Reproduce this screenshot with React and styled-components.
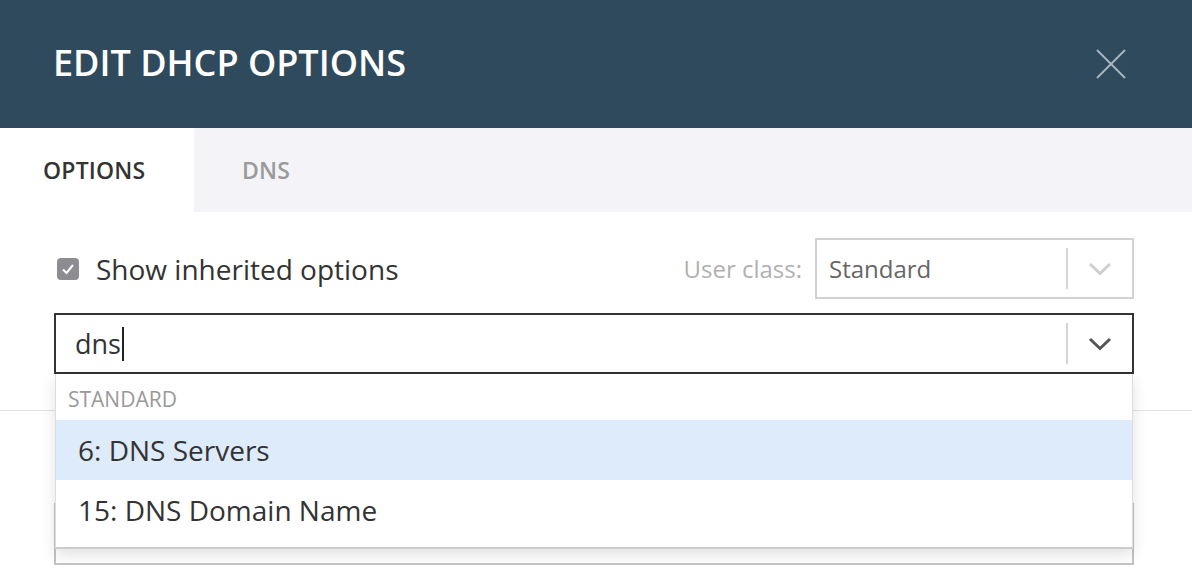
import React from "react";
import styled, { createGlobalStyle } from "styled-components";

const GlobalStyle = createGlobalStyle`
  html, body {
    margin: 0;
    padding: 0;
    background: #ffffff;
    font-family: "Open Sans", "Noto Sans", sans-serif;
  }
  * { box-sizing: border-box; }
`;

const options = [
  { id: 6, label: "6: DNS Servers", active: true },
  { id: 15, label: "15: DNS Domain Name", active: false },
];

function Chevron({ color }) {
  return (
    <svg width="24" height="14" viewBox="0 0 24 14">
      <polyline points="2,2 12,11.5 22,2" fill="none" stroke={color} strokeWidth="3" />
    </svg>
  );
}

function App() {
  return (
    <Page>
      <GlobalStyle />
      <Header>
        <Title>EDIT DHCP OPTIONS</Title>
        <CloseButton aria-label="close">
          <svg width="30" height="30" viewBox="0 0 30 30">
            <line x1="1" y1="1" x2="29" y2="29" stroke="#a9b5bd" strokeWidth="2" />
            <line x1="29" y1="1" x2="1" y2="29" stroke="#a9b5bd" strokeWidth="2" />
          </svg>
        </CloseButton>
      </Header>

      <Tabs>
        <Tab active>OPTIONS</Tab>
        <Tab>DNS</Tab>
      </Tabs>

      <Body>
        <Section>
          <ControlsRow>
            <CheckLabel>
              <CheckBox>
                <svg width="14" height="12" viewBox="0 0 14 12">
                  <polyline points="2,6.5 5.5,10 12,2" fill="none" stroke="#fff" strokeWidth="2" />
                </svg>
              </CheckBox>
              Show inherited options
            </CheckLabel>
            <ClassPicker>
              <FieldLabel>User class:</FieldLabel>
              <Select>
                <SelectValue>Standard</SelectValue>
                <Separator />
                <ArrowCell>
                  <Chevron color="#cfcfcf" />
                </ArrowCell>
              </Select>
            </ClassPicker>
          </ControlsRow>

          <SearchWrap>
            <SearchBox>
              <SearchValue>
                dns<Caret />
              </SearchValue>
              <Separator />
              <ArrowCell>
                <Chevron color="#555555" />
              </ArrowCell>
            </SearchBox>
            <Menu>
              <MenuGroup>STANDARD</MenuGroup>
              {options.map((opt) => (
                <MenuItem key={opt.id} active={opt.active}>
                  {opt.label}
                </MenuItem>
              ))}
            </Menu>
          </SearchWrap>
        </Section>

        <Rule />

        <Section>
          <ValueBox />
        </Section>
      </Body>
    </Page>
  );
}

export default App;

const Page = styled.div`
  width: 1192px;
  min-height: 588px;
  display: flex;
  flex-direction: column;
`;

const Header = styled.div`
  height: 128px;
  background: #2e4a5c;
  display: flex;
  align-items: center;
  justify-content: space-between;
  padding: 0 66px 4px 53px;
`;

const Title = styled.h1`
  margin: 0;
  color: #ffffff;
  font-size: 36px;
  font-weight: 600;
`;

const CloseButton = styled.button`
  border: none;
  background: transparent;
  padding: 0;
  width: 30px;
  height: 30px;
  margin-top: 4px;
  display: flex;
  cursor: pointer;
`;

const Tabs = styled.div`
  height: 84px;
  background: #f4f4f8;
  display: flex;
`;

const Tab = styled.div`
  width: ${(p) => (p.active ? "194px" : "auto")};
  padding: 0 48px 0 ${(p) => (p.active ? "43px" : "48px")};
  display: flex;
  align-items: center;
  background: ${(p) => (p.active ? "#ffffff" : "transparent")};
  color: ${(p) => (p.active ? "#333333" : "#9a9a9a")};
  font-size: 23px;
  font-weight: 600;
  letter-spacing: 0.2px;
`;

const Body = styled.div`
  padding-top: 26px;
  display: flex;
  flex-direction: column;
`;

const Section = styled.div`
  padding: 0 58px 0 54px;
`;

const ControlsRow = styled.div`
  display: flex;
  align-items: center;
  justify-content: space-between;
`;

const CheckLabel = styled.label`
  display: flex;
  align-items: center;
  gap: 17px;
  margin-left: 3px;
  font-size: 28px;
  color: #333333;
`;

const CheckBox = styled.span`
  width: 22px;
  height: 22px;
  border-radius: 4px;
  background: #8c8c91;
  display: flex;
  align-items: center;
  justify-content: center;
`;

const ClassPicker = styled.div`
  display: flex;
  align-items: center;
  gap: 13px;
`;

const FieldLabel = styled.span`
  font-size: 24px;
  color: #b0b0b0;
`;

const Select = styled.div`
  width: 319px;
  height: 61px;
  border: 2px solid #d2d2d2;
  display: flex;
  align-items: center;
`;

const SelectValue = styled.span`
  flex: 1;
  padding-left: 12px;
  font-size: 24px;
  color: #666666;
`;

const Separator = styled.span`
  width: 2px;
  height: 41px;
  background: #d4d4d4;
`;

const ArrowCell = styled.span`
  width: 64px;
  display: flex;
  align-items: center;
  justify-content: center;
`;

const SearchWrap = styled.div`
  position: relative;
  margin-top: 14px;
`;

const SearchBox = styled.div`
  height: 61px;
  border: 2px solid #333333;
  display: flex;
  align-items: center;
`;

const SearchValue = styled.span`
  flex: 1;
  padding-left: 19px;
  font-size: 27px;
  color: #333333;
  display: flex;
  align-items: center;
`;

const Caret = styled.span`
  display: inline-block;
  width: 2px;
  height: 34px;
  margin-left: 1px;
  background: #222222;
`;

const Menu = styled.div`
  position: absolute;
  top: 100%;
  left: 1px;
  right: 1px;
  z-index: 5;
  background: #ffffff;
  border: 1px solid #dddddd;
  border-top: none;
  border-bottom: 2px solid #cccccc;
  padding-bottom: 7px;
  box-shadow: 0 6px 14px rgba(0, 0, 0, 0.12);
`;

const MenuGroup = styled.div`
  height: 46px;
  display: flex;
  align-items: center;
  padding: 3px 0 0 12px;
  font-size: 21px;
  color: #999999;
`;

const MenuItem = styled.div`
  height: 60px;
  display: flex;
  align-items: center;
  padding-left: 22px;
  font-size: 28px;
  color: #333333;
  background: ${(p) => (p.active ? "#deebfb" : "#ffffff")};
`;

const Rule = styled.div`
  margin-top: 36px;
  height: 1px;
  background: #e3e3e3;
`;

const ValueBox = styled.div`
  margin-top: 92px;
  height: 62px;
  border: 2px solid #c4c4c4;
`;
